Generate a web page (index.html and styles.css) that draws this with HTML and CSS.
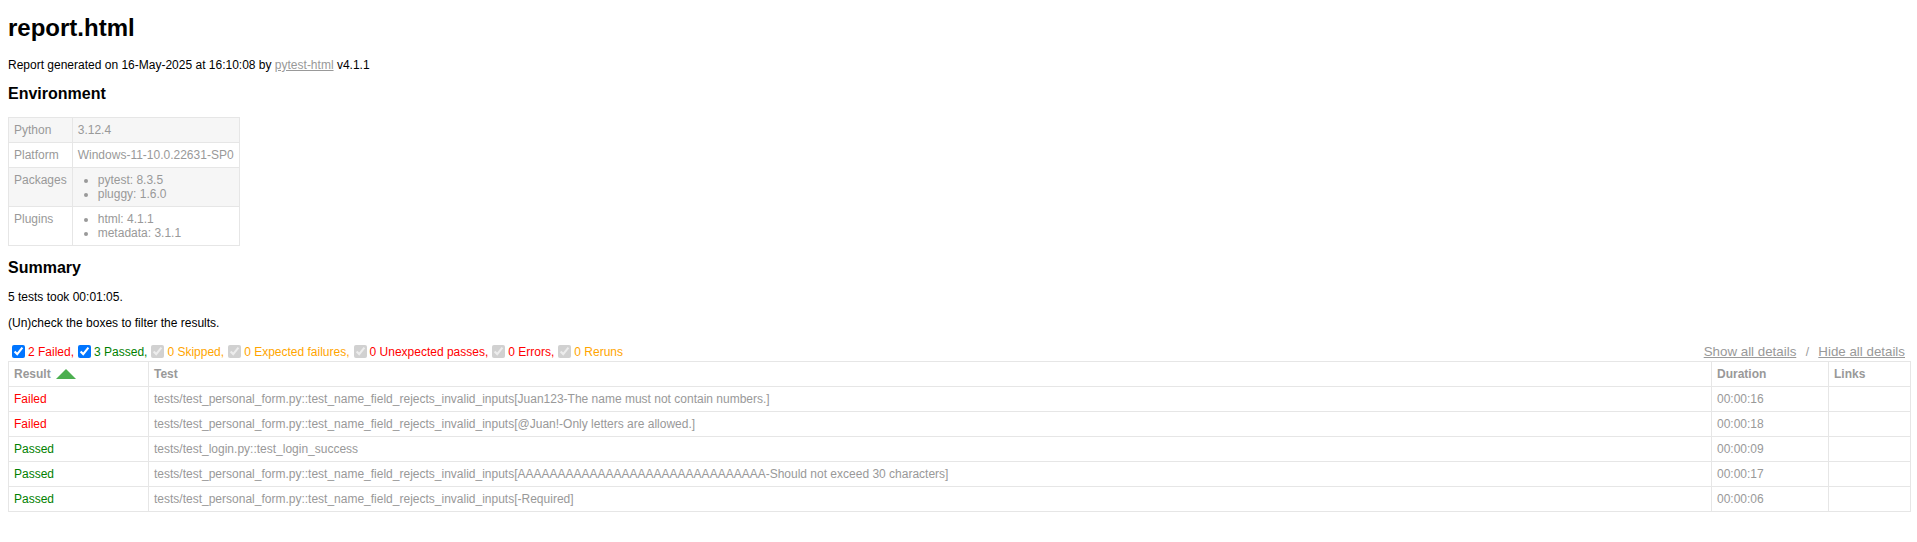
FILE: index.html
```html
<!DOCTYPE html>
<html>
<head>
<meta charset="utf-8">
<title>report.html</title>
<link rel="stylesheet" href="styles.css">
</head>
<body>
<h1 id="title">report.html</h1>
<p>Report generated on 16-May-2025 at 16:10:08 by <a href="#">pytest-html</a> v4.1.1</p>
<div id="environment-header"><h2>Environment</h2></div>
<table id="environment">
  <tr><td>Python</td><td>3.12.4</td></tr>
  <tr><td>Platform</td><td>Windows-11-10.0.22631-SP0</td></tr>
  <tr><td>Packages</td><td><ul><li>pytest: 8.3.5</li><li>pluggy: 1.6.0</li></ul></td></tr>
  <tr><td>Plugins</td><td><ul><li>html: 4.1.1</li><li>metadata: 3.1.1</li></ul></td></tr>
</table>
<div class="summary">
  <div class="summary__data">
    <h2>Summary</h2>
    <p class="run-count">5 tests took 00:01:05.</p>
    <p class="filter">(Un)check the boxes to filter the results.</p>
    <div class="controls">
      <div class="filters">
        <input checked type="checkbox" class="filter"><span class="failed">2 Failed,</span>
        <input checked type="checkbox" class="filter"><span class="passed">3 Passed,</span>
        <input checked disabled type="checkbox" class="filter"><span class="skipped">0 Skipped,</span>
        <input checked disabled type="checkbox" class="filter"><span class="xfailed">0 Expected failures,</span>
        <input checked disabled type="checkbox" class="filter"><span class="xpassed">0 Unexpected passes,</span>
        <input checked disabled type="checkbox" class="filter"><span class="error">0 Errors,</span>
        <input checked disabled type="checkbox" class="filter"><span class="rerun">0 Reruns</span>
      </div>
      <div class="collapse">
        <button class="link-btn">Show all details</button>&nbsp;/&nbsp;<button class="link-btn">Hide all details</button>
      </div>
    </div>
  </div>
</div>
<table id="results-table">
  <thead>
    <tr>
      <th class="sortable asc col-result-h">Result</th>
      <th class="sortable">Test</th>
      <th class="sortable col-duration-h">Duration</th>
      <th class="col-links-h">Links</th>
    </tr>
  </thead>
  <tbody>
    <tr class="failed"><td class="col-result">Failed</td><td>tests/test_personal_form.py::test_name_field_rejects_invalid_inputs[Juan123-The name must not contain numbers.]</td><td>00:00:16</td><td></td></tr>
    <tr class="failed"><td class="col-result">Failed</td><td>tests/test_personal_form.py::test_name_field_rejects_invalid_inputs[@Juan!-Only letters are allowed.]</td><td>00:00:18</td><td></td></tr>
    <tr class="passed"><td class="col-result">Passed</td><td>tests/test_login.py::test_login_success</td><td>00:00:09</td><td></td></tr>
    <tr class="passed"><td class="col-result">Passed</td><td>tests/test_personal_form.py::test_name_field_rejects_invalid_inputs[AAAAAAAAAAAAAAAAAAAAAAAAAAAAAAA-Should not exceed 30 characters]</td><td>00:00:17</td><td></td></tr>
    <tr class="passed"><td class="col-result">Passed</td><td>tests/test_personal_form.py::test_name_field_rejects_invalid_inputs[-Required]</td><td>00:00:06</td><td></td></tr>
  </tbody>
</table>
</body>
</html>
```
FILE: styles.css
```css
body {
  font-family: "Liberation Sans", Arial, Helvetica, sans-serif;
  font-size: 12px;
  min-width: 800px;
  color: #999;
  margin: 0 6px 8px 8px;
}
h1 { font-size: 24px; color: black; margin: 14px 0 16px; }
h2 { font-size: 16px; color: black; }
p { color: black; }
a { color: #999; }
table { border-collapse: collapse; }

#environment td {
  padding: 5px;
  border: 1px solid #e6e6e6;
  vertical-align: top;
}
#environment tr:nth-child(odd) { background-color: #f6f6f6; }
#environment ul { margin: 0; padding: 0 20px; }

span.passed, .passed .col-result { color: green; }
span.skipped, span.xfailed, span.rerun { color: orange; }
span.error, span.failed, span.xpassed, .failed .col-result { color: red; }

.controls {
  display: flex;
  justify-content: space-between;
}
.filters, .collapse {
  display: flex;
  align-items: center;
}
.filters span { white-space: pre; }
.filters input { margin: 3px 3px 3px 4px; }
.filters span + input { margin-left: 4px; }
.link-btn {
  font-family: "Liberation Sans", Arial, sans-serif;
  font-size: 13.333px;
  color: #999;
  border: none;
  background: none;
  cursor: pointer;
  text-decoration: underline;
  padding: 1px 6px;
}

#results-table {
  border: 1px solid #e6e6e6;
  color: #999;
  font-size: 12px;
  width: 100%;
}
#results-table th, #results-table td {
  padding: 5px;
  border: 1px solid #e6e6e6;
  text-align: left;
}
#results-table th { font-weight: bold; }
#results-table .col-result-h { width: 129px; }
#results-table .col-duration-h { width: 106px; }
#results-table .col-links-h { width: 71px; }

.sortable { cursor: pointer; }
.sortable.asc:after {
  content: " ";
  position: relative;
  left: 5px;
  bottom: 12.5px;
  border: 10px solid #4caf50;
  border-top: 0;
  border-left-color: transparent;
  border-right-color: transparent;
}
```
